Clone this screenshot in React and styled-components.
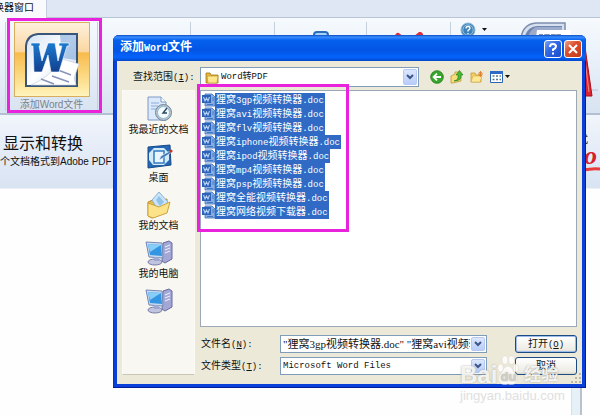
import React from 'react'
import styled, { createGlobalStyle } from 'styled-components'

const GlobalStyle = createGlobalStyle`
    * {
        box-sizing: border-box;
    }
    body {
        margin: 0;
        background: #fefefe;
        color: #111;
        font: 10px/14px "Liberation Sans", "Noto Sans CJK SC", sans-serif;
    }
    button, input, select {
        margin: 0;
        padding: 0;
        font: inherit;
        color: inherit;
    }
    svg {
        display: block;
        flex: none;
    }
`

/* converter window behind the dialog */
const Page = styled.div`
    position: relative;
    display: flex;
    flex-direction: column;
    min-height: 100vh;
    overflow: hidden;
`
const TabBar = styled.nav`
    display: flex;
    height: 18px;
    background: #dfe7f4;
    border-bottom: 1px solid #b9c4d4;
`
const Tab = styled.button`
    display: flex;
    justify-content: flex-end;
    width: 47px;
    height: 18px;
    padding-right: 12px;
    overflow: hidden;
    border: 0;
    border-right: 1px solid #c3cddc;
    background: #f8fafd;
    line-height: 16px;
    white-space: nowrap;
`
const Ribbon = styled.div`
    display: flex;
    height: 97px;
    padding: 4px 0 2px 5px;
    background: linear-gradient(#f6fafe, #e9f0f9 45%, #d8e3f1);
    border-bottom: 2px solid #b3c0d3;
`
const Group = styled.div`
    display: flex;
    justify-content: center;
    align-items: flex-start;
    gap: 8px;
    width: ${({ $width }) => $width}px;
    padding-top: ${({ $top }) => $top || 0}px;
    border-left: 1px solid #c5d0df;
`
const AddButton = styled.button`
    display: flex;
    flex-direction: column;
    align-items: center;
    gap: 1px;
    border: 0;
    background: none;
    color: #7b828c;
    white-space: nowrap;
`
const AddIcon = styled.span`
    display: flex;
    align-items: center;
    justify-content: center;
    width: 76px;
    height: 75px;
    border: 1px solid #d8ae5d;
    background: linear-gradient(#fdf0dc, #fbd7a1 39%, #f8bb4c 41%, #fde59a 85%, #fff3bd);
`
const PlainButton = styled.button`
    display: flex;
    align-items: center;
    gap: ${({ $gap }) => $gap || 0}px;
    border: 0;
    background: none;
`
const Brand = styled.div`
    display: flex;
    flex: 1;
    justify-content: space-between;
    padding-left: 24px;
`
const Banner = styled.section`
    display: flex;
    justify-content: space-between;
    height: 73px;
    background: linear-gradient(#f1f5fb, #dfe8f6 70%, #d9e4f3);
    white-space: nowrap;
`
const BannerTitle = styled.h1`
    margin: 18px 0 0 3px;
    font-size: 16px;
    line-height: 22px;
    font-weight: 400;
`
const BannerText = styled.p`
    margin: 0;
`
const Slogan = styled.div`
    display: flex;
    flex-direction: column;
    align-items: flex-start;
    width: 22px;
    padding-top: 18px;
`
const SloganMark = styled.em`
    padding-left: 6px;
    color: #d6202c;
    font: italic bold 26px/18px "Liberation Serif", serif;
`
const Canvas = styled.main`
    display: flex;
    flex: 1;
    justify-content: flex-end;
    padding-right: 18px;
    border-top: 1px solid #eef2f8;
`
const Track = styled.div`
    width: 11px;
    background: #e6f0f7;
    border-left: 1px solid #d5e1ea;
    border-right: 2px solid #b9c1cb;
`

/* dialog */
const Dialog = styled.section`
    position: absolute;
    top: 35px;
    left: 113px;
    right: 14px;
    padding: 0 4px 4px;
    border-radius: 6px 6px 0 0;
    background: #0a3fd8;
    box-shadow: inset -1px -1px #001e9c, inset 1px 0 #0831b5;
`
const TitleBar = styled.header`
    display: flex;
    align-items: center;
    gap: 2px;
    height: 26px;
    margin: 0 -4px;
    padding: 1px 4px 0 7px;
    border-radius: 6px 6px 0 0;
    background: linear-gradient(#0a4fc4, #3a8cff 8%, #0560ee 20%, #0355e4 60%, #0463fc 85%, #0348cb);
    color: #fff;
`
const Title = styled.h2`
    flex: 1;
    margin: 0;
    font: bold 12px/20px "Liberation Mono", "Noto Sans CJK SC", monospace;
`
const CaptionButton = styled.button`
    display: flex;
    align-items: center;
    justify-content: center;
    width: 18px;
    height: 18px;
    border: 1px solid #fff;
    border-radius: 3px;
    background: ${({ $close }) => ($close
        ? 'linear-gradient(135deg, #f0a088, #dc5030 40%, #c23a14)'
        : 'linear-gradient(135deg, #7ba4f5, #3169e6 40%, #1c4bc8)')};
`
const Body = styled.div`
    display: flex;
    flex-direction: column;
    gap: 3px;
    padding: 6px 5px 9px;
    background: #ece9d8;
`
const Latin = styled.span`
    font-family: "Liberation Mono", monospace;
    font-size: ${({ $size }) => $size || 9}px;
`
const LookRow = styled.div`
    display: flex;
    align-items: center;
    height: 20px;
`
const LookLabel = styled.label`
    width: 78px;
    padding-left: 11px;
    white-space: nowrap;
`
const LookBox = styled.div`
    display: flex;
    align-items: center;
    flex: 1;
    height: 20px;
    margin-right: 11px;
    padding-left: 4px;
    border: 1px solid #7f9db9;
    background: #fff;
`
const Picker = styled.select`
    flex: 1;
    min-width: 0;
    height: 14px;
    padding-left: 2px;
    border: 0;
    appearance: none;
    background: transparent;
    font: 9px/14px "Liberation Mono", "Noto Sans CJK SC", monospace;
`
const Arrow = styled.button`
    display: flex;
    align-items: center;
    justify-content: center;
    flex: none;
    width: 14px;
    align-self: stretch;
    margin: 1px;
    border: 1px solid #b5c9f4;
    border-radius: 2px;
    background: linear-gradient(#dce7fd, #b8cdf8);
`
const Tools = styled.div`
    display: flex;
    align-items: center;
    gap: 6px;
    width: 147px;
`
const Content = styled.div`
    display: flex;
    gap: 5px;
`
const Places = styled.nav`
    display: flex;
    flex-direction: column;
    gap: 6px;
    width: 73px;
    padding-top: 4px;
    border: 1px solid #fbfaf4;
    border-bottom-color: #c9c6b7;
    background: #f8f7f1;
`
const Place = styled.button`
    display: flex;
    flex-direction: column;
    align-items: center;
    width: 100%;
    height: 42px;
    border: 0;
    background: none;
    white-space: nowrap;
`
const Main = styled.div`
    display: flex;
    flex-direction: column;
    flex: 1;
    gap: 8px;
    min-width: 0;
`
const FileList = styled.ul`
    height: 237px;
    margin: 0;
    padding: 2px 1px;
    border: 1px solid #9aa9b5;
    background: #fff;
    list-style: none;
`
const FileRow = styled.li`
    display: flex;
    align-items: center;
    height: 14px;
`
const FileName = styled.span`
    display: block;
    height: 14px;
    padding: 0 1px;
    background: #316ac5;
    color: #fff;
    line-height: 14px;
    white-space: nowrap;
`
const Fields = styled.form`
    display: grid;
    grid-template-columns: 79px 1fr 62px;
    row-gap: 4px;
    align-items: center;
    padding-left: 1px;
`
const Combo = styled.div`
    display: flex;
    align-items: center;
    height: 18px;
    margin-right: 28px;
    border: 1px solid #7f9db9;
    background: #fff;
`
const NameInput = styled.input`
    flex: 1;
    min-width: 0;
    height: 16px;
    padding-left: 2px;
    border: 0;
    outline: 0;
    background: transparent;
    font: 11px/16px "Liberation Serif", "Noto Sans CJK SC", serif;
`
const DialogButton = styled.button`
    height: 18px;
    border: 1px solid #1c4a83;
    border-radius: 3px;
    background: linear-gradient(#fff, #ecebe4 85%, #d9d5c8);
    box-shadow: ${({ $primary }) => ($primary ? 'inset 0 0 0 1px #9dbbeb' : 'none')};
    line-height: 14px;
`

/* marks over the windows */
const Highlight = styled.div`
    position: absolute;
    top: ${({ $top }) => $top}px;
    left: ${({ $left }) => $left}px;
    width: ${({ $width }) => $width}px;
    height: ${({ $height }) => $height}px;
    border: 3px solid #e923dc;
    pointer-events: none;
`
const Grip = styled.svg`
    position: absolute;
    right: 5px;
    bottom: 5px;
`
const Watermark = styled.div`
    position: absolute;
    right: 34px;
    bottom: 11px;
    width: 106px;
    pointer-events: none;
`
const WatermarkLogo = styled.div`
    display: flex;
    align-items: flex-end;
    height: 36px;
    padding-bottom: 2px;
    color: rgba(255, 255, 255, 0.85);
    font-size: 24px;
    font-weight: 700;
    line-height: 22px;
    text-shadow: 0 0 2px rgba(120, 118, 105, 0.6);
`
const WatermarkCity = styled.span`
    margin-left: 5px;
    font-size: 17px;
    white-space: nowrap;
`
const WatermarkSite = styled.div`
    color: #e0e0e0;
    font-size: 13px;
    line-height: 16px;
`

const WordIcon = () => (
    <svg width="56" height="56" viewBox="0 0 56 56">
        <defs>
            <linearGradient id="page" x1="0" y1="0" x2="1" y2="1">
                <stop offset="0" stopColor="#d4e2f3" />
                <stop offset=".5" stopColor="#fff" />
                <stop offset="1" stopColor="#b9cce6" />
            </linearGradient>
            <linearGradient id="w" x1="0" y1="0" x2="0" y2="1">
                <stop offset="0" stopColor="#1c7bcf" />
                <stop offset="1" stopColor="#123f8f" />
            </linearGradient>
        </defs>
        <path d="M14 2h39v52H2V14Q3 3 14 2z" fill="url(#page)" stroke="#395579" strokeWidth="2" />
        <path d="M36 3h16v25l-14-2z" fill="#7fa8da" opacity=".6" />
        <path d="M38 27l17 5-5 14 2 7H7q18-7 31-26z" fill="#fff" stroke="#c7d1df" strokeWidth=".7" />
        <path d="M34 38l13 5M28 44l17 6M17 47l13 5" stroke="#8893b9" strokeWidth="1.4" />
        <path d="M7 11h9v3h-1l3 15 6-18h7l3 18 4-15h-3v-3h10v3h-2l-8 26h-8l-3-17-6 17h-8L9 14H7z" fill="url(#w)" stroke="#fff" strokeWidth=".6" />
    </svg>
)

const HelpIcon = () => (
    <svg width="16" height="16" viewBox="0 0 16 16">
        <circle cx="8" cy="8" r="7" fill="#3d83b9" stroke="#8eb7d3" />
        <circle cx="8" cy="8" r="5.2" fill="none" stroke="#b9d8ea" strokeWidth=".7" />
        <path d="M6 6.5Q6 4.5 8 4.5t2 1.8Q10 7.5 8 8.4v1M8 11v1.2" fill="none" stroke="#fff" strokeWidth="1.3" />
    </svg>
)

const Caret = () => (
    <svg width="6" height="4" viewBox="0 0 6 4"><path d="M0 0h5L2.5 3z" fill="#111" /></svg>
)

const Chevron = () => (
    <svg width="8" height="6" viewBox="0 0 8 6">
        <path d="M1 1l3 3 3-3" fill="none" stroke="#3d5686" strokeWidth="2" />
    </svg>
)

const BrandLogo = () => (
    <svg width="52" height="54" viewBox="0 0 52 54">
        <path d="M1 54V16Q3 2 16 1h29v53z" fill="#d7e0ef" stroke="#7d8dad" strokeWidth="1.5" />
        <path d="M4 54V18Q6 5 17 4h25v50z" fill="#7185b2" />
        <path d="M17 5h25v10H8q3-9 9-10z" fill="#9cabc9" />
        <path d="M17 8h34v30H13z" fill="#fff" />
        <path d="M19 13h4M19 16h3M25 16v-3h4v3M31 13h4v3M37 16v-3h4" fill="none" stroke="#56709f" strokeWidth="1.5" />
    </svg>
)

const RedMark = () => (
    <svg width="16" height="80" viewBox="0 0 16 80">
        <path d="M0 18l8 56H0z" fill="#dc2430" stroke="#a80f1c" />
        <path d="M0 30l5 40" stroke="#f08a8d" />
        <path d="M8 68h6" stroke="#bac2cf" />
    </svg>
)

const FolderIcon = () => (
    <svg width="14" height="13" viewBox="0 0 14 13">
        <path d="M1 2h4l1 2h7v8H1z" fill="#e9b838" stroke="#9c7416" strokeWidth=".8" />
        <path d="M2 5h11l-1 7H3z" fill="#ffe58c" stroke="#b48a25" strokeWidth=".6" />
    </svg>
)

const BackIcon = () => (
    <svg width="14" height="14" viewBox="0 0 14 14">
        <circle cx="7" cy="7" r="6.3" fill="#38a62c" stroke="#1d7716" strokeWidth=".8" />
        <path d="M11 7H4M7 3.6L3.6 7 7 10.4" fill="none" stroke="#fff" strokeWidth="1.8" />
    </svg>
)

const UpIcon = () => (
    <svg width="14" height="14" viewBox="0 0 14 14">
        <path d="M1 6l4-2v-2h4l2 1v8l-8 2H1z" fill="#f7dc79" stroke="#b99128" strokeWidth=".7" />
        <path d="M4 11q5-1 4-6H6l3.500-4.500L13 5h-2q1 6-7 6z" fill="#49b637" stroke="#217a18" strokeWidth=".6" />
    </svg>
)

const NewFolderIcon = () => (
    <svg width="14" height="14" viewBox="0 0 14 14">
        <path d="M1 3h4l1 2h5v7H1z" fill="#f4cf62" stroke="#bd9329" strokeWidth=".7" />
        <path d="M3 6h9l-2 6H1z" fill="#ffe893" stroke="#c9a23c" strokeWidth=".5" />
        <path d="M10.500 1v6M8 4h5M9 2l3 4M12 2L9 6" stroke="#e37a2c" strokeWidth=".9" />
    </svg>
)

const ViewIcon = () => (
    <svg width="13" height="12" viewBox="0 0 13 12">
        <path d="M.5.5h12v11H.5z" fill="#fff" stroke="#2a62b8" />
        <path d="M0 0h13v3H0z" fill="#2c69c9" />
        <path d="M2.500 5h2M6 5h2M9.500 5h1.500M2.500 8.500h2M6 8.500h2M9.500 8.500h1.500" stroke="#557a8c" strokeWidth="1.6" />
    </svg>
)

const RecentIcon = () => (
    <svg width="28" height="28" viewBox="0 0 28 28">
        <path d="M3 2h13l5 5v18H3z" fill="#dce9fa" stroke="#7d9ac6" />
        <path d="M16 2v5h5" fill="#fff" stroke="#7d9ac6" />
        <path d="M6 8h8M6 11h7M6 14h5" stroke="#a4c0e7" strokeWidth="1.5" />
        <circle cx="18.500" cy="17.500" r="8" fill="#b9c5cf" stroke="#73859a" />
        <circle cx="18.500" cy="17.500" r="6" fill="#f2fafe" stroke="#91b8cd" />
        <path d="M22 13l-4 5h4" fill="none" stroke="#28485e" strokeWidth="1.4" />
    </svg>
)

const DesktopIcon = () => (
    <svg width="28" height="28" viewBox="0 0 28 28">
        <path d="M3 4l22-2 1 20-23 3z" fill="#2467b4" stroke="#174887" />
        <path d="M9 5h10l5 5v7l-5 5H8l-4-5v-7z" fill="#d3eaf8" />
        <path d="M9 8h10v12H9z" fill="#e8f5fd" stroke="#347bc0" strokeWidth="1.5" />
        <path d="M14 17l2-4 9-5 2 1-9 6z" fill="#4379b9" stroke="#fff" strokeWidth=".5" />
        <circle cx="26" cy="8" r="1.600" fill="#c8322d" />
    </svg>
)

const DocumentsIcon = () => (
    <svg width="28" height="28" viewBox="0 0 28 28">
        <path d="M3 11l7-3 3 2 9-2v13L7 27l-4-2z" fill="#e9b94b" stroke="#b88d2c" />
        <path d="M14 1l9 10-9 10L7 9z" fill="#c9e4f8" stroke="#8eb4d0" />
        <path d="M14 5l5 6-4 4-4-6z" fill="#8fc3ea" />
        <path d="M3 12l11 4 11-5-3 11-14 5-5-2z" fill="#fce389" stroke="#cda540" />
    </svg>
)

const ComputerIcon = () => (
    <svg width="28" height="28" viewBox="0 0 28 28">
        <path d="M18 4l6-2 3 2v16l-7 4-3-2z" fill="#a2a7d6" stroke="#666c9e" />
        <path d="M20 8l5-2M20 11l5-2M20 14l5-2" stroke="#e9ebfa" strokeWidth="1.2" />
        <path d="M1 3l16 1 1 15-14-1z" fill="#c9d9ee" stroke="#7487b7" />
        <path d="M3 5l13 1 1 11-12-1z" fill="#3396e3" />
        <path d="M3 5l13 1-11 7z" fill="#86cdf8" />
        <ellipse cx="10" cy="23" rx="7" ry="3" fill="#c0c4de" stroke="#787ea9" />
        <path d="M9 18h5v4H9z" fill="#9da6ce" />
    </svg>
)

const DocIcon = () => (
    <svg width="13" height="14" viewBox="0 0 13 14">
        <path d="M3 1h7l3 3v9H3z" fill="#86aee5" stroke="#3c6eb8" strokeWidth=".8" />
        <path d="M0 2h9v8H0z" fill="#2d62b8" />
        <path d="M1.500 4l1.500 4 1.500-3L6 8l1.500-4" fill="none" stroke="#b6d4f7" strokeWidth="1.1" />
        <path d="M10 5h2M10 7h2M5 11.500h6" stroke="#3569b6" strokeWidth=".8" />
    </svg>
)

const Paw = () => (
    <svg width="22" height="32" viewBox="0 0 21 32">
        <g fill="#fff" stroke="#d4d1c4" strokeWidth=".5" opacity=".85">
            <ellipse cx="3" cy="14" rx="2.800" ry="4" />
            <ellipse cx="7.500" cy="6" rx="3" ry="4.200" />
            <ellipse cx="14" cy="6" rx="3" ry="4.200" />
            <ellipse cx="18.200" cy="14" rx="2.600" ry="4" />
            <path d="M10.500 12q4 0 6 6 5 4 3 9-2 5-9 3-7 2-9-3-2-5 3-9 2-6 6-6z" />
        </g>
        <text x="3" y="27" fontSize="13" fontWeight="700" fill="#cfcdc3">du</text>
    </svg>
)

// western runs are set in a narrower monospaced face than the Chinese around them
const Mixed = ({ text, size }) => text.split(/([!-~]+)/).map((part, i) => (
    i % 2 ? <Latin key={i} $size={size}>{part}</Latin> : part
))

const AccessLabel = ({ text, letter }) => (
    <>{text}<Latin>(<u>{letter}</u>)</Latin></>
)

const places = [
    { label: '我最近的文档', Icon: RecentIcon },
    { label: '桌面', Icon: DesktopIcon },
    { label: '我的文档', Icon: DocumentsIcon },
    { label: '我的电脑', Icon: ComputerIcon },
    { label: '', Icon: ComputerIcon },
]

const files = [
    '狸窝3gp视频转换器.doc',
    '狸窝avi视频转换器.doc',
    '狸窝flv视频转换器.doc',
    '狸窝iphone视频转换器.doc',
    '狸窝ipod视频转换器.doc',
    '狸窝mp4视频转换器.doc',
    '狸窝psp视频转换器.doc',
    '狸窝全能视频转换器.doc',
    '狸窝网络视频下载器.doc',
]

const OpenDialog = () => (
    <Dialog role="dialog" aria-labelledby="dialog-title">
        <TitleBar>
            <Title id="dialog-title">添加<Latin $size={10}>Word</Latin>文件</Title>
            <CaptionButton aria-label="帮助">
                <svg width="12" height="14" viewBox="0 0 12 14">
                    <path d="M3 5Q3 2 6 2t3 2.500Q9 6 6 7.500V9M6 10.500v2" fill="none" stroke="#fff" strokeWidth="2" />
                </svg>
            </CaptionButton>
            <CaptionButton $close aria-label="关闭">
                <svg width="12" height="12" viewBox="0 0 12 12">
                    <path d="M2 2l8 8M10 2l-8 8" stroke="#fff" strokeWidth="2" />
                </svg>
            </CaptionButton>
        </TitleBar>
        <Body>
            <LookRow>
                <LookLabel htmlFor="look"><AccessLabel text="查找范围" letter="I" /><Latin>:</Latin></LookLabel>
                <LookBox>
                    <FolderIcon />
                    <Picker id="look"><option>Word转PDF</option></Picker>
                    <Arrow aria-label="展开"><Chevron /></Arrow>
                </LookBox>
                <Tools>
                    <PlainButton aria-label="后退"><BackIcon /></PlainButton>
                    <PlainButton aria-label="向上"><UpIcon /></PlainButton>
                    <PlainButton aria-label="新建文件夹"><NewFolderIcon /></PlainButton>
                    <PlainButton $gap={2} aria-label="查看"><ViewIcon /><Caret /></PlainButton>
                </Tools>
            </LookRow>
            <Content>
                <Places>
                    {places.map(({ label, Icon }, i) => (
                        <Place key={i} aria-label={label || '网上邻居'}><Icon />{label}</Place>
                    ))}
                </Places>
                <Main>
                    <FileList>
                        {files.map((name) => (
                            <FileRow key={name}>
                                <DocIcon />
                                <FileName><Mixed text={name} /></FileName>
                            </FileRow>
                        ))}
                    </FileList>
                    <Fields onSubmit={(e) => e.preventDefault()}>
                        <label htmlFor="name"><AccessLabel text="文件名" letter="N" /><Latin>:</Latin></label>
                        <Combo>
                            <NameInput id="name" defaultValue={files.map((f) => `"${f}"`).join(' ')} />
                            <Arrow type="button" aria-label="展开"><Chevron /></Arrow>
                        </Combo>
                        <DialogButton $primary><AccessLabel text="打开" letter="O" /></DialogButton>
                        <label htmlFor="type"><AccessLabel text="文件类型" letter="T" /><Latin>:</Latin></label>
                        <Combo>
                            <Picker id="type"><option>Microsoft Word Files</option></Picker>
                            <Arrow type="button" aria-label="展开"><Chevron /></Arrow>
                        </Combo>
                        <DialogButton type="button">取消</DialogButton>
                    </Fields>
                </Main>
            </Content>
        </Body>
        <Grip width="10" height="10" viewBox="0 0 10 10">
            <path d="M8 0h2v2H8zM8 4h2v2H8zM4 4h2v2H4zM8 8h2v2H8zM4 8h2v2H4zM0 8h2v2H0z" fill="#bdb8a4" />
        </Grip>
    </Dialog>
)

const App = () => {
    return (
        <Page>
            <GlobalStyle />
            <TabBar><Tab>换器窗口</Tab></TabBar>
            <Ribbon>
                <Group $width={92}>
                    <AddButton>
                        <AddIcon><WordIcon /></AddIcon>
                        添加Word文件
                    </AddButton>
                </Group>
                <Group $width={93} />
                <Group $width={84} />
                <Group $width={92} $top={9}>
                    <svg width="16" height="16" viewBox="0 0 16 16">
                        <rect x="1" y="1" width="14" height="14" rx="3" fill="#a9d2f4" stroke="#2c6dbb" strokeWidth="2" />
                    </svg>
                </Group>
                <Group $width={84} $top={10}>
                    <svg width="28" height="12" viewBox="0 0 28 12">
                        <path d="M3 4l10 8M25 3L14 12" stroke="#d9303a" strokeWidth="6" strokeLinecap="round" />
                    </svg>
                </Group>
                <Group $width={46}>
                    <PlainButton $gap={6} aria-label="帮助"><HelpIcon /><Caret /></PlainButton>
                </Group>
                <Brand><BrandLogo /><RedMark /></Brand>
            </Ribbon>
            <Banner>
                <div>
                    <BannerTitle>显示和转换</BannerTitle>
                    <BannerText>个文档格式到Adobe PDF</BannerText>
                </div>
                <Slogan>
                    <span>式</span>
                    <SloganMark>o</SloganMark>
                    <svg width="22" height="8" viewBox="0 0 22 8">
                        <path d="M0 7Q10 3 22 4" fill="none" stroke="#ea3b3b" strokeWidth="3" />
                    </svg>
                </Slogan>
            </Banner>
            <Canvas><Track /></Canvas>
            <OpenDialog />
            <Highlight $top={18} $left={7} $width={95} $height={95} />
            <Highlight $top={84} $left={197} $width={152} $height={148} />
            <Watermark>
                <WatermarkLogo>Bai<Paw /><WatermarkCity>经验</WatermarkCity></WatermarkLogo>
                <WatermarkSite>jingyan.baidu.com</WatermarkSite>
            </Watermark>
        </Page>
    )
}

export default App
